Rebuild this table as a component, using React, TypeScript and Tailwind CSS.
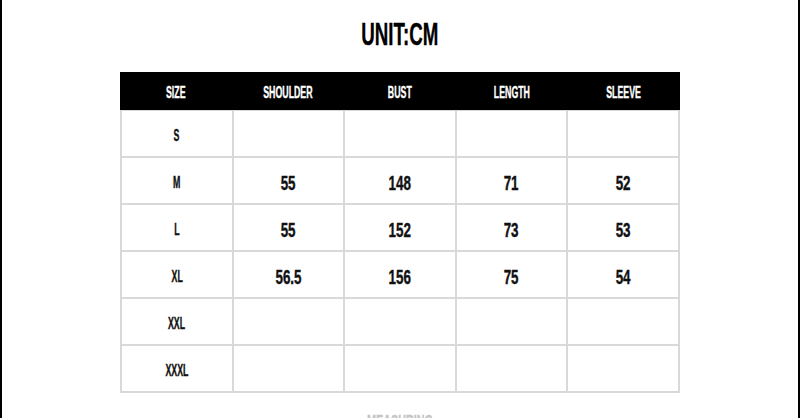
const headers = ["SIZE", "SHOULDER", "BUST", "LENGTH", "SLEEVE"];

const rows: string[][] = [
  ["S", "", "", "", ""],
  ["M", "55", "148", "71", "52"],
  ["L", "55", "152", "73", "53"],
  ["XL", "56.5", "156", "75", "54"],
  ["XXL", "", "", "", ""],
  ["XXXL", "", "", "", ""],
];

const fontStyling = "font-['Liberation_Sans',sans-serif] font-bold [-webkit-text-stroke:0.4px_currentColor]";

export default function App() {
  return (
    <div className="w-[800px] h-[418px] overflow-hidden bg-white border-x-2 border-black flex flex-col items-center">
      <h1 className={`${fontStyling} mt-[18px] h-[32px] text-[32px] leading-none text-black`}>
        <span className="inline-block scale-x-[0.585]">UNIT:CM</span>
      </h1>

      <div className="mt-[22px] w-[560px]">
        {/* Header */}
        <div className="grid grid-cols-5 h-[38px] bg-black">
          {headers.map((h) => (
            <div key={h} className={`${fontStyling} flex items-center justify-center pt-[4px] text-[16px] leading-none text-white`}>
              <span className="inline-block scale-x-[0.55]">{h}</span>
            </div>
          ))}
        </div>

        {/* Body */}
        <div className="grid grid-cols-5 gap-[2px] bg-[#d9d9d9] px-[2px] pt-[1px] pb-[2px]">
          {rows.map((row) =>
            row.map((cell, i) => (
              <div
                key={`${row[0]}-${i}`}
                className={`${fontStyling} flex items-center justify-center h-[45px] pt-[5px] bg-white leading-none text-[#111]`}
              >
                {i === 0 ? (
                  <span className="inline-block text-[16px] scale-x-[0.55]">{cell}</span>
                ) : (
                  <span className="inline-block text-[20px] scale-x-[0.67]">{cell}</span>
                )}
              </div>
            ))
          )}
        </div>
      </div>

      <div className={`${fontStyling} mt-[20px] text-[18px] leading-none text-[#c4c4c4]`}>
        <span className="inline-block scale-x-[0.6]">MEASURING</span>
      </div>
    </div>
  );
}
